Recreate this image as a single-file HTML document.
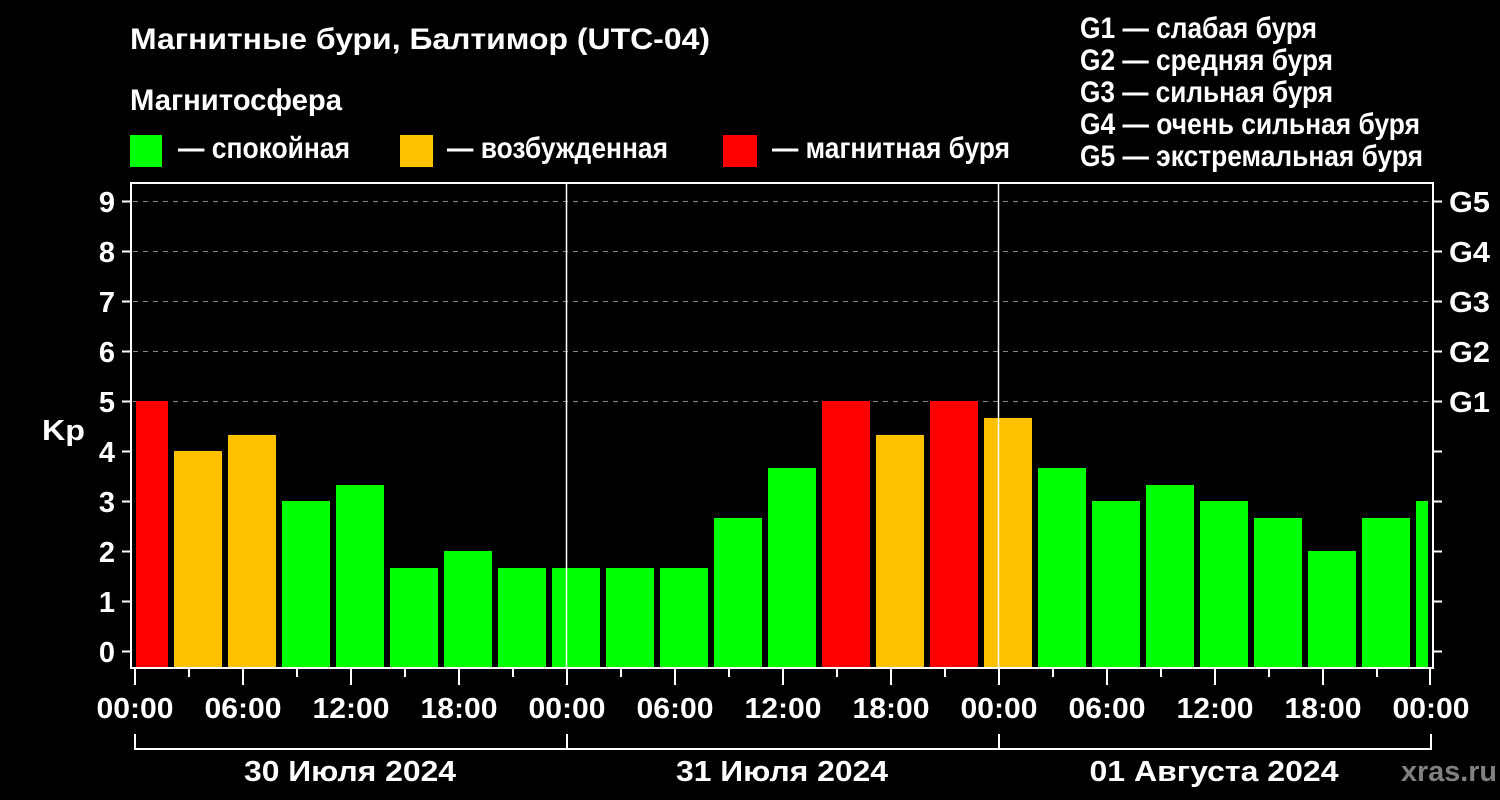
<!DOCTYPE html>
<html><head><meta charset="utf-8"><style>
html,body{margin:0;padding:0;background:#000;}
svg{display:block;font-family:"Liberation Sans",sans-serif;font-weight:bold;}
</style></head><body>
<svg width="1500" height="800" viewBox="0 0 1500 800" xmlns="http://www.w3.org/2000/svg">
<rect width="1500" height="800" fill="#000"/>
<g fill="#fff" font-size="30">
<text x="130" y="49" textLength="580" lengthAdjust="spacingAndGlyphs">Магнитные бури, Балтимор (UTC-04)</text>
<text x="130" y="110" textLength="212" lengthAdjust="spacingAndGlyphs">Магнитосфера</text>
<text x="178" y="158" textLength="172" lengthAdjust="spacingAndGlyphs">— спокойная</text>
<text x="447" y="158" textLength="221" lengthAdjust="spacingAndGlyphs">— возбужденная</text>
<text x="772" y="158" textLength="238" lengthAdjust="spacingAndGlyphs">— магнитная буря</text>
<text x="1080" y="38" textLength="237" lengthAdjust="spacingAndGlyphs">G1 — слабая буря</text>
<text x="1080" y="70" textLength="253" lengthAdjust="spacingAndGlyphs">G2 — средняя буря</text>
<text x="1080" y="102" textLength="253" lengthAdjust="spacingAndGlyphs">G3 — сильная буря</text>
<text x="1080" y="134" textLength="340" lengthAdjust="spacingAndGlyphs">G4 — очень сильная буря</text>
<text x="1080" y="166" textLength="343" lengthAdjust="spacingAndGlyphs">G5 — экстремальная буря</text>
</g>
<rect x="130" y="135" width="32" height="32" fill="#00ff00"/>
<rect x="400" y="135" width="33" height="32" fill="#ffc000"/>
<rect x="723" y="135" width="34" height="32" fill="#ff0000"/>
<g stroke="#888" stroke-width="1" stroke-dasharray="5,5">
<line x1="133" x2="1432" y1="201.5" y2="201.5"/>
<line x1="133" x2="1432" y1="251.5" y2="251.5"/>
<line x1="133" x2="1432" y1="301.5" y2="301.5"/>
<line x1="133" x2="1432" y1="351.5" y2="351.5"/>
<line x1="133" x2="1432" y1="401.5" y2="401.5"/>
</g>
<g>
<rect x="136" y="401" width="32" height="267" fill="#ff0000"/>
<rect x="174" y="451" width="48" height="217" fill="#ffc000"/>
<rect x="228" y="435" width="48" height="233" fill="#ffc000"/>
<rect x="282" y="501" width="48" height="167" fill="#00ff00"/>
<rect x="336" y="485" width="48" height="183" fill="#00ff00"/>
<rect x="390" y="568" width="48" height="100" fill="#00ff00"/>
<rect x="444" y="551" width="48" height="117" fill="#00ff00"/>
<rect x="498" y="568" width="48" height="100" fill="#00ff00"/>
<rect x="552" y="568" width="48" height="100" fill="#00ff00"/>
<rect x="606" y="568" width="48" height="100" fill="#00ff00"/>
<rect x="660" y="568" width="48" height="100" fill="#00ff00"/>
<rect x="714" y="518" width="48" height="150" fill="#00ff00"/>
<rect x="768" y="468" width="48" height="200" fill="#00ff00"/>
<rect x="822" y="401" width="48" height="267" fill="#ff0000"/>
<rect x="876" y="435" width="48" height="233" fill="#ffc000"/>
<rect x="930" y="401" width="48" height="267" fill="#ff0000"/>
<rect x="984" y="418" width="48" height="250" fill="#ffc000"/>
<rect x="1038" y="468" width="48" height="200" fill="#00ff00"/>
<rect x="1092" y="501" width="48" height="167" fill="#00ff00"/>
<rect x="1146" y="485" width="48" height="183" fill="#00ff00"/>
<rect x="1200" y="501" width="48" height="167" fill="#00ff00"/>
<rect x="1254" y="518" width="48" height="150" fill="#00ff00"/>
<rect x="1308" y="551" width="48" height="117" fill="#00ff00"/>
<rect x="1362" y="518" width="48" height="150" fill="#00ff00"/>
<rect x="1416" y="501" width="12" height="167" fill="#00ff00"/>
</g>
<g stroke="#fff" stroke-width="2" fill="none">
<rect x="131" y="183" width="1302" height="485"/>
<line x1="566.5" x2="566.5" y1="183" y2="668" stroke-width="1.5"/>
<line x1="998.5" x2="998.5" y1="183" y2="668" stroke-width="1.5"/>
<path d="M122 201.5H131M122 251.5H131M122 301.5H131M122 351.5H131M122 401.5H131M122 451.5H131M122 501.5H131M122 551.5H131M122 601.5H131M122 651.5H131"/>
<path d="M1433 201.5H1442M1433 251.5H1442M1433 301.5H1442M1433 351.5H1442M1433 401.5H1442M1433 451.5H1442M1433 501.5H1442M1433 551.5H1442M1433 601.5H1442M1433 651.5H1442"/>
<path d="M135 668V685M243 668V685M351 668V685M459 668V685M567 668V685M675 668V685M783 668V685M891 668V685M999 668V685M1107 668V685M1215 668V685M1323 668V685M1430 668V685"/>
<path d="M189 668V677M297 668V677M405 668V677M513 668V677M621 668V677M729 668V677M837 668V677M945 668V677M1053 668V677M1161 668V677M1269 668V677M1377 668V677"/>
<path d="M135 734V749H1431V734M567 734V749M999 734V749"/>
</g>
<g fill="#fff" font-size="29">
<g text-anchor="end">
<text x="115" y="212">9</text><text x="115" y="262">8</text><text x="115" y="312">7</text>
<text x="115" y="362">6</text><text x="115" y="412">5</text><text x="115" y="462">4</text>
<text x="115" y="512">3</text><text x="115" y="562">2</text><text x="115" y="612">1</text>
<text x="115" y="662">0</text>
</g>
<text x="1449" y="212" textLength="41" lengthAdjust="spacingAndGlyphs">G5</text>
<text x="1449" y="262" textLength="41" lengthAdjust="spacingAndGlyphs">G4</text>
<text x="1449" y="312" textLength="41" lengthAdjust="spacingAndGlyphs">G3</text>
<text x="1449" y="362" textLength="41" lengthAdjust="spacingAndGlyphs">G2</text>
<text x="1449" y="412" textLength="41" lengthAdjust="spacingAndGlyphs">G1</text>
<text x="42" y="440" textLength="43" lengthAdjust="spacingAndGlyphs">Kp</text>
<g text-anchor="middle">
<text x="135" y="718" textLength="77" lengthAdjust="spacingAndGlyphs">00:00</text>
<text x="243" y="718" textLength="77" lengthAdjust="spacingAndGlyphs">06:00</text>
<text x="351" y="718" textLength="77" lengthAdjust="spacingAndGlyphs">12:00</text>
<text x="459" y="718" textLength="77" lengthAdjust="spacingAndGlyphs">18:00</text>
<text x="567" y="718" textLength="77" lengthAdjust="spacingAndGlyphs">00:00</text>
<text x="675" y="718" textLength="77" lengthAdjust="spacingAndGlyphs">06:00</text>
<text x="783" y="718" textLength="77" lengthAdjust="spacingAndGlyphs">12:00</text>
<text x="891" y="718" textLength="77" lengthAdjust="spacingAndGlyphs">18:00</text>
<text x="999" y="718" textLength="77" lengthAdjust="spacingAndGlyphs">00:00</text>
<text x="1107" y="718" textLength="77" lengthAdjust="spacingAndGlyphs">06:00</text>
<text x="1215" y="718" textLength="77" lengthAdjust="spacingAndGlyphs">12:00</text>
<text x="1323" y="718" textLength="77" lengthAdjust="spacingAndGlyphs">18:00</text>
<text x="1431" y="718" textLength="77" lengthAdjust="spacingAndGlyphs">00:00</text>
<text x="350" y="781" textLength="212" lengthAdjust="spacingAndGlyphs">30 Июля 2024</text>
<text x="782" y="781" textLength="212" lengthAdjust="spacingAndGlyphs">31 Июля 2024</text>
<text x="1214" y="781" textLength="249" lengthAdjust="spacingAndGlyphs">01 Августа 2024</text>
</g>
</g>
<text x="1401" y="781" fill="#808080" font-size="29" textLength="96" lengthAdjust="spacingAndGlyphs">xras.ru</text>
</svg>
</body></html>
